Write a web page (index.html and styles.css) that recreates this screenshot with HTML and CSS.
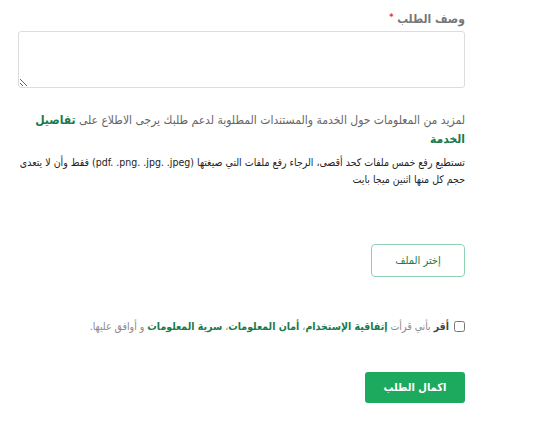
FILE: index.html
```html
<!DOCTYPE html>
<html lang="ar" dir="rtl">
<head>
    <meta charset="UTF-8">
    <meta name="viewport" content="width=device-width, initial-scale=1.0">
    <title>وصف الطلب</title>
    <link rel="stylesheet" href="styles.css">
</head>
<body>
    <section class="form">
        <div class="field">
            <label for="desc" class="label">وصف الطلب <span class="req">*</span></label>
            <textarea id="desc" name="desc" class="textarea"></textarea>
        </div>
        <p class="info">لمزيد من المعلومات حول الخدمة والمستندات المطلوبة لدعم طلبك يرجى الاطلاع على <a href="#" class="link">تفاصيل الخدمة</a></p>
        <p class="note">تستطيع رفع خمس ملفات كحد أقصى، الرجاء رفع ملفات التي صيغتها <bdi dir="ltr">(pdf. .png. .jpg. .jpeg)</bdi> فقط وأن لا يتعدى حجم كل منها اثنين ميجا بايت</p>
        <div class="upload">
            <button type="button" class="fileBtn">إختر الملف</button>
        </div>
        <div class="agree">
            <input type="checkbox" id="agree" class="check">
            <label for="agree"><b class="dark">أقر</b> بأني قرأت <a href="#" class="link">إتفاقية الإستخدام</a>، <a href="#" class="link">أمان المعلومات</a>، <a href="#" class="link">سرية المعلومات</a> و أوافق عليها.</label>
        </div>
        <button type="button" class="submitBtn">اكمال الطلب</button>
    </section>
</body>
</html>
```

FILE: styles.css
```css
*{
    margin: 0;
    padding: 0;
    box-sizing: border-box;
}
body{
    background-color: #fff;
    font-family: "DejaVu Sans Condensed", "DejaVu Sans", sans-serif;
    color: #666;
}
.form{
    width: 447px;
    margin: 12px 88px 0 18px;
}
.label{
    display: block;
    font-size: 12px;
    font-weight: bold;
    color: #777;
    margin-bottom: 5px;
}
.req{
    color: #d33;
    font-size: 9px;
    vertical-align: top;
}
.textarea{
    display: block;
    width: 100%;
    height: 57px;
    border: 1px solid #ddd;
    border-radius: 3px;
    resize: both;
}
.info{
    margin-top: 23px;
    font-size: 12px;
    color: #666;
    line-height: 19px;
}
.link{
    color: #1a7a4a;
    font-weight: bold;
    text-decoration: none;
}
.note{
    margin-top: 5px;
    font-size: 10.5px;
    color: #222;
    line-height: 17px;
}
.upload{
    margin-top: 56px;
}
.fileBtn{
    width: 94px;
    height: 33px;
    background-color: #fff;
    border: 1px solid #8fd3b5;
    border-radius: 4px;
    color: #1a7a4a;
    font-family: inherit;
    font-size: 11px;
}
.agree{
    margin-top: 43px;
    display: flex;
    align-items: center;
    gap: 5px;
    font-size: 10.5px;
    color: #888;
}
.check{
    width: 11px;
    height: 11px;
}
.dark{
    color: #444;
}
.submitBtn{
    margin-top: 40px;
    width: 100px;
    height: 31px;
    background-color: #1daa5e;
    border: none;
    border-radius: 3px;
    color: #fff;
    font-family: inherit;
    font-size: 11px;
    font-weight: bold;
}
```
